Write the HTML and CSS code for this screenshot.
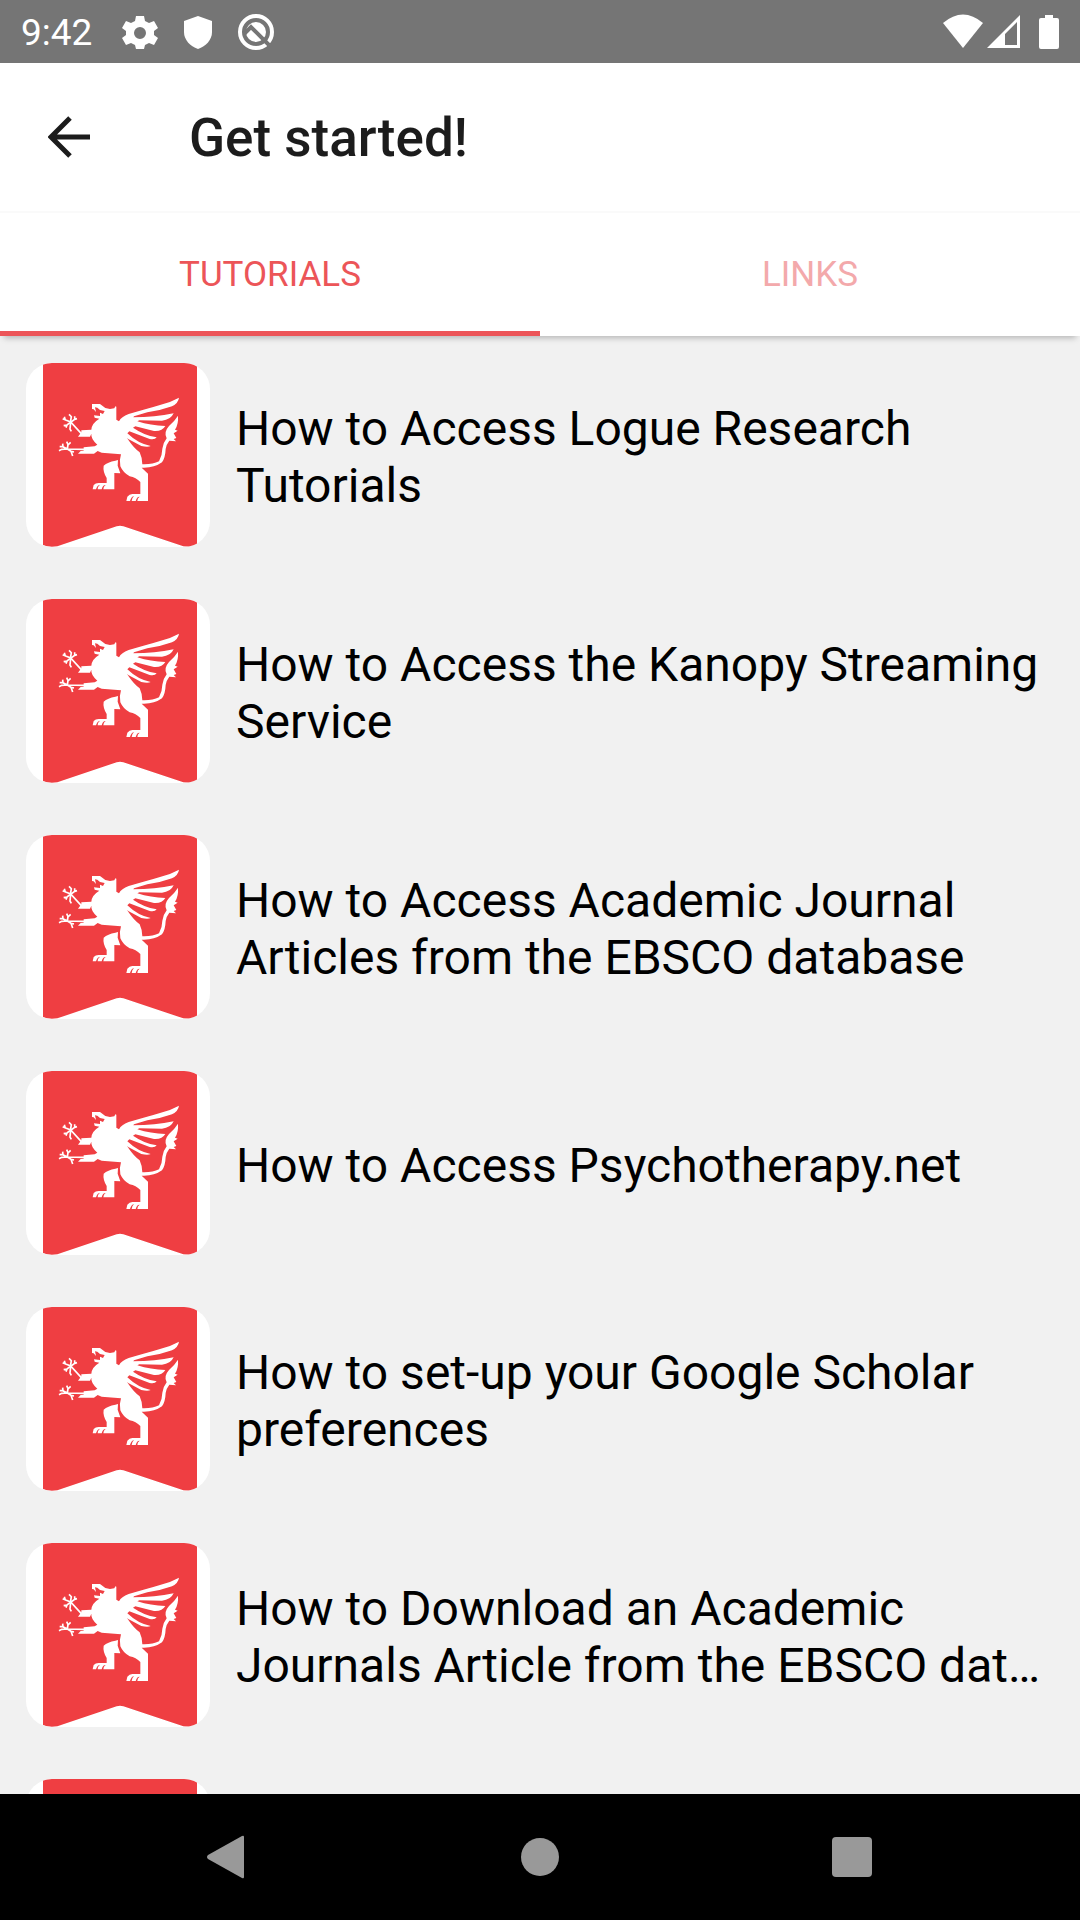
FILE: index.html
```
<!DOCTYPE html>
<html lang="en">
<head>
    <meta charset="UTF-8">
    <meta name="viewport" content="width=device-width, initial-scale=1.0">
    <title>Get started!</title>
    <link rel="stylesheet" href="styles.css">
</head>
<body>
    <!-- Griffin banner, reused by every row -->
    <svg class="sprite" aria-hidden="true">
        <symbol id="griffin" viewBox="18 21 552 552">
            <path fill="#ef3e42" d="M69 24Q80 21 95 21H500Q522 21 531 30V568Q515 575 490 571L310 511Q300 507 290 511L112 571Q85 575 69 567Z"/>
            <g transform="translate(90 90)" fill="#fff">
                <path d="M126 54L150 54L166 66L180 69L193 67L196 61L199 62L199 101L207 106Q214 92 236 84Q292 68 330 57Q362 49 387 35Q385 51 366 61Q330 74 292 79L252 91L250 94Q315 94 371 82Q362 102 336 104L268 103L262 106Q302 119 346 120Q336 137 312 135L256 121L249 125Q284 149 320 154Q315 162 299 159L238 136L232 142Q264 173 302 180Q294 185 274 180L236 160L231 156Q251 186 269 199Q276 213 277 235Q308 236 327 226Q337 207 337 188Q339 171 350 157Q340 139 357 120Q374 105 384 89Q386 114 375 131L383 134L371 142L379 156L371 159L378 166L358 164Q349 175 347 189Q346 215 336 229Q311 247 275 245L294 263V345H262Q262 336 269 332Q261 331 257 345H245Q245 336 252 331Q244 331 240 345H229L232 332Q239 323 249 324H271V288Q258 275 239 271Q219 260 211 241Q207 223 213 205L155 200L143 195L132 203H84L92 195L101 194V184L134 181L142 176Q122 158 124 143L120 152H84L94 139V133L124 131Q125 112 148 98L134 95L132 88L150 90V80L159 84L164 75L150 72L142 65L135 64L138 78L131 70L126 69Z"/>
                <path d="M161 239Q173 228 196 224L204 222L203 239L211 262L193 261V310H160Q160 301 167 297Q158 297 155 310H143Q143 301 150 296Q142 297 138 310H128L131 297Q137 290 149 291H170V276Q158 256 161 239Z"/>
            </g>
            <g transform="translate(90 90)" fill="none" stroke="#fff" stroke-width="5">
                <path d="M94 143L62 108L47 102L38 98M46 103L43 92M61 110L64 92L57 85M62 109L74 100L81 98M74 101L74 91M62 109L60 129L64 136M61 109L51 117L41 119M51 117L48 125"/>
                <path d="M102 190L52 189L35 190L27 194M52 189L38 182L29 182M39 183L38 173M52 189L54 176L50 167M54 177L62 169M52 189L63 196L68 210M63 196L72 198"/>
            </g>
        </symbol>
    </svg>

    <div class="status-bar">
        <span class="time">9:42</span>
        <svg class="status-icon" viewBox="0 0 40 40" fill="#fff">
            <path fill-rule="evenodd" d="M16 4h8l1 5 4 2 5-2 4 7-4 3v4l4 3-4 7-5-2-4 2-1 4h-8l-1-4-4-2-5 2-4-7 4-3v-4l-4-3 4-7 5 2 4-2zM20 15a6 6 0 1 0 0 12 6 6 0 0 0 0-12z"/>
        </svg>
        <svg class="status-icon" viewBox="0 0 40 40" fill="#fff">
            <path d="M20 4l14 5v11c0 8-6 14-14 17C12 34 6 28 6 20V9z"/>
        </svg>
        <svg class="status-icon" viewBox="0 0 40 40">
            <circle cx="20" cy="20" r="16" fill="none" stroke="#fff" stroke-width="4"/>
            <circle cx="20" cy="20" r="10" fill="#fff"/>
            <path d="M8 22l7-7 18 18" fill="none" stroke="#757575" stroke-width="4"/>
            <path d="M12 22l3-3 9 9q-7 4-12-6z" fill="#fff"/>
        </svg>
        <div class="signals">
            <svg width="40" height="36" viewBox="0 0 40 36" fill="#fff"><path d="M0 9Q20-8 40 9L20 34z"/></svg>
            <svg width="34" height="36" viewBox="0 0 34 36" fill="#fff"><path fill-rule="evenodd" d="M33 1v33H0zM30 8L18 20v11h12z"/></svg>
            <svg class="battery" width="20" height="36" viewBox="0 0 20 36" fill="#fff"><path d="M6 1h8v3h4q2 0 2 2v27q0 2-2 2H2q-2 0-2-2V6q0-2 2-2h4z"/></svg>
        </div>
    </div>

    <header>
        <button class="back" type="button" aria-label="Back">
            <svg width="42" height="42" viewBox="0 0 42 42" fill="none" stroke="#1c1c1c" stroke-width="5"><path d="M42 21H4M22 2L3 21l19 19"/></svg>
        </button>
        <h1>Get started!</h1>
    </header>

    <nav class="tabs">
        <a class="active" href="#tutorials">TUTORIALS</a>
        <a href="#links">LINKS</a>
    </nav>

    <main id="tutorials">
        <ul class="tutorial-list">
            <li>
                <svg class="thumb"><use href="#griffin"/></svg>
                <p>How to Access Logue Research Tutorials</p>
            </li>
            <li>
                <svg class="thumb"><use href="#griffin"/></svg>
                <p>How to Access the Kanopy Streaming Service</p>
            </li>
            <li>
                <svg class="thumb"><use href="#griffin"/></svg>
                <p>How to Access Academic Journal Articles from the EBSCO database</p>
            </li>
            <li>
                <svg class="thumb"><use href="#griffin"/></svg>
                <p>How to Access Psychotherapy.net</p>
            </li>
            <li>
                <svg class="thumb"><use href="#griffin"/></svg>
                <p>How to set-up your Google Scholar preferences</p>
            </li>
            <li>
                <svg class="thumb"><use href="#griffin"/></svg>
                <p>How to Download an Academic Journals Article from the EBSCO dat…</p>
            </li>
            <li>
                <svg class="thumb"><use href="#griffin"/></svg>
            </li>
        </ul>
    </main>

    <footer>
        <button type="button" aria-label="System back">
            <svg width="42" height="44" viewBox="0 0 42 44" fill="#999"><path d="M35 1q2-1 2 1v40q0 2-2 1L1 24q-2-2 0-4z"/></svg>
        </button>
        <button type="button" aria-label="Home">
            <svg width="40" height="40" viewBox="0 0 40 40" fill="#999"><circle cx="20" cy="20" r="19"/></svg>
        </button>
        <button type="button" aria-label="Recent apps">
            <svg width="40" height="40" viewBox="0 0 40 40" fill="#999"><rect width="40" height="40" rx="4"/></svg>
        </button>
    </footer>
</body>
</html>
```
FILE: styles.css
```
* {
    box-sizing: border-box;
}
body {
    font-family: Roboto, sans-serif;
    margin: 0;
    height: 100vh;
    display: flex;
    flex-direction: column;
    overflow: hidden;
    background-color: #f1f1f1;
    color: #000;
}
svg {
    display: block;
}
button {
    border: 0;
    padding: 0;
    background: none;
}
.sprite {
    position: absolute;
    width: 0;
    height: 0;
}
.status-bar {
    flex: none;
    display: flex;
    align-items: center;
    height: 63px;
    padding: 0 21px;
    background-color: #757575;
    color: #fff;
}
.time {
    font-size: 37px;
    padding-top: 2px;
    margin-right: 28px;
}
.status-icon {
    width: 40px;
    height: 40px;
    margin-right: 18px;
}
.signals {
    display: flex;
    gap: 4px;
    margin-left: auto;
}
.battery {
    margin-left: 14px;
}
header {
    flex: none;
    display: flex;
    align-items: center;
    height: 148px;
    padding: 0 48px;
    background-color: #fff;
}
.back {
    margin-right: 99px;
}
header h1 {
    margin: 0;
    padding-top: 2px;
    font-size: 53px;
    font-weight: 500;
    color: #1c1c1c;
}
.tabs {
    flex: none;
    display: flex;
    height: 125px;
    background-color: #fff;
    border-top: 2px solid #fafafa;
    box-shadow: 0 6px 6px -4px rgba(0, 0, 0, 0.25);
}
.tabs a {
    flex: 1;
    display: flex;
    align-items: center;
    justify-content: center;
    padding-top: 5px;
    border-bottom: 5px solid transparent;
    font-size: 35px;
    color: #f3a9ab;
    text-decoration: none;
}
.tabs .active {
    color: #ec5558;
    border-color: #ec5558;
}
main {
    flex: 1;
    min-height: 0;
    overflow: hidden;
}
.tutorial-list {
    list-style-type: none;
    margin: 0;
    padding: 27px 26px;
}
.tutorial-list li {
    display: flex;
    align-items: center;
    gap: 26px;
    margin-bottom: 52px;
}
.thumb {
    flex: none;
    width: 184px;
    height: 184px;
    border-radius: 26px;
    background-color: #fff;
}
.tutorial-list p {
    margin: 0;
    padding-top: 4px;
    font-size: 48px;
    line-height: 57px;
}
footer {
    flex: none;
    display: grid;
    grid-template-columns: repeat(3, 1fr);
    height: 126px;
    padding: 0 72px;
    background-color: #000;
}
footer button {
    display: flex;
    align-items: center;
    justify-content: center;
}
```
